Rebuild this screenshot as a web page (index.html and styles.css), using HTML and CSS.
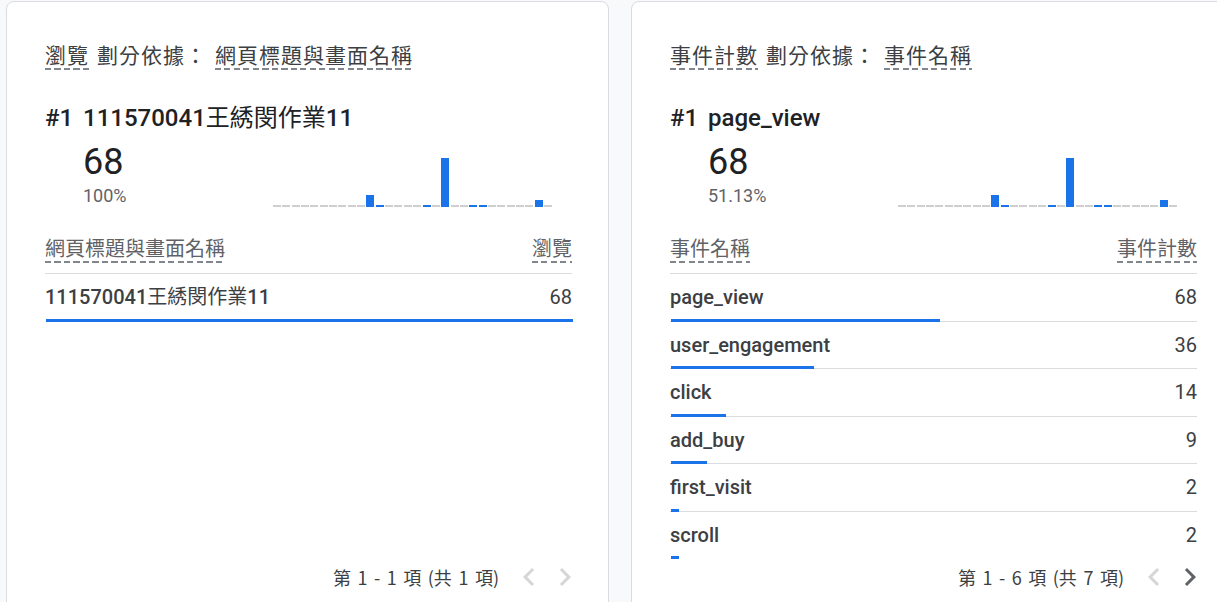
FILE: index.html
```html
<!DOCTYPE html>
<html lang="zh-Hant">
<head>
<meta charset="utf-8">
<title>報表卡片</title>
<link rel="stylesheet" href="styles.css">
</head>
<body>
<div class="page">
  <section class="card">
    <div class="card-title"><span class="dash">瀏覽</span><span class="plain">劃分依據：</span><span class="dash">網頁標題與畫面名稱</span></div>
    <div class="rank"><span class="rank-no">#1</span><span class="rank-name">111570041<span class="cjk">王綉閔作業</span>11</span></div>
    <div class="summary">
      <div class="figures"><div class="big">68</div><div class="pct">100%</div></div>
      <div class="spark">
        <i class="z"></i><i class="z"></i><i class="z"></i><i class="z"></i><i class="z"></i><i class="z"></i><i class="z"></i><i class="z"></i><i class="z"></i><i class="z"></i>
        <i class="b" style="height:12px"></i><i class="b" style="height:2px"></i><i class="z"></i><i class="z"></i><i class="z"></i><i class="z"></i><i class="b" style="height:2px"></i><i class="z"></i>
        <i class="b" style="height:49px"></i><i class="z"></i><i class="z"></i><i class="b" style="height:2px"></i><i class="b" style="height:2px"></i><i class="z"></i><i class="z"></i><i class="z"></i><i class="z"></i><i class="z"></i>
        <i class="b" style="height:7px"></i><i class="z"></i>
      </div>
    </div>
    <div class="table">
      <div class="thead"><span class="dash">網頁標題與畫面名稱</span><span class="dash">瀏覽</span></div>
      <div class="row">
        <div class="cells"><span class="name">111570041<span class="cjk">王綉閔作業</span>11</span><span class="val">68</span></div>
        <div class="track"><div class="fill" style="width:100%"></div></div>
      </div>
    </div>
    <div class="pager">
      <span class="range">第 1 - 1 項 (共 1 項)</span>
      <svg class="chev off" viewBox="0 0 24 24" width="36" height="36"><path d="M15.41 7.41L14 6l-6 6 6 6 1.41-1.41L10.83 12z"/></svg>
      <svg class="chev off" viewBox="0 0 24 24" width="36" height="36"><path d="M10 6L8.59 7.41 13.17 12l-4.58 4.59L10 18l6-6z"/></svg>
    </div>
  </section>

  <section class="card">
    <div class="card-title"><span class="dash">事件計數</span><span class="plain">劃分依據：</span><span class="dash">事件名稱</span></div>
    <div class="rank"><span class="rank-no">#1</span><span class="rank-name">page_view</span></div>
    <div class="summary">
      <div class="figures"><div class="big">68</div><div class="pct">51.13%</div></div>
      <div class="spark">
        <i class="z"></i><i class="z"></i><i class="z"></i><i class="z"></i><i class="z"></i><i class="z"></i><i class="z"></i><i class="z"></i><i class="z"></i><i class="z"></i>
        <i class="b" style="height:12px"></i><i class="b" style="height:2px"></i><i class="z"></i><i class="z"></i><i class="z"></i><i class="z"></i><i class="b" style="height:2px"></i><i class="z"></i>
        <i class="b" style="height:49px"></i><i class="z"></i><i class="z"></i><i class="b" style="height:2px"></i><i class="b" style="height:2px"></i><i class="z"></i><i class="z"></i><i class="z"></i><i class="z"></i><i class="z"></i>
        <i class="b" style="height:7px"></i><i class="z"></i>
      </div>
    </div>
    <div class="table">
      <div class="thead"><span class="dash">事件名稱</span><span class="dash">事件計數</span></div>
      <div class="row">
        <div class="cells"><span class="name">page_view</span><span class="val">68</span></div>
        <div class="track"><div class="fill" style="width:51.13%"></div></div>
      </div>
      <div class="row">
        <div class="cells"><span class="name">user_engagement</span><span class="val">36</span></div>
        <div class="track"><div class="fill" style="width:27.07%"></div></div>
      </div>
      <div class="row">
        <div class="cells"><span class="name">click</span><span class="val">14</span></div>
        <div class="track"><div class="fill" style="width:10.53%"></div></div>
      </div>
      <div class="row">
        <div class="cells"><span class="name">add_buy</span><span class="val">9</span></div>
        <div class="track"><div class="fill" style="width:6.77%"></div></div>
      </div>
      <div class="row">
        <div class="cells"><span class="name">first_visit</span><span class="val">2</span></div>
        <div class="track"><div class="fill" style="width:1.5%"></div></div>
      </div>
      <div class="row">
        <div class="cells"><span class="name">scroll</span><span class="val">2</span></div>
        <div class="track"><div class="fill" style="width:1.5%"></div></div>
      </div>
    </div>
    <div class="pager">
      <span class="range">第 1 - 6 項 (共 7 項)</span>
      <svg class="chev off" viewBox="0 0 24 24" width="36" height="36"><path d="M15.41 7.41L14 6l-6 6 6 6 1.41-1.41L10.83 12z"/></svg>
      <svg class="chev on" viewBox="0 0 24 24" width="36" height="36"><path d="M10 6L8.59 7.41 13.17 12l-4.58 4.59L10 18l6-6z"/></svg>
    </div>
  </section>
</div>
</body>
</html>
```

FILE: styles.css
```css
html, body {
  margin: 0;
  overflow: hidden;
  background: #f8f9fa;
}

.page {
  display: flex;
  gap: 22px;
  padding: 1px 0 0 6px;
  width: max-content;
}

.card {
  box-sizing: border-box;
  width: 603px;
  height: 610px;
  flex-shrink: 0;
  background: #fff;
  border: 1px solid #dadce0;
  border-radius: 8px;
  padding: 38px 36px 15px 38px;
  display: flex;
  flex-direction: column;
  font-family: Roboto, "Noto Sans CJK TC", sans-serif;
  color: #3c4043;
}

.dash {
  padding-bottom: 2px;
  background: repeating-linear-gradient(90deg, #80868b 0 6px, transparent 6px 9.5px) left bottom / 100% 2px no-repeat;
}

.card-title {
  display: flex;
  align-items: flex-start;
  gap: 8px;
  font-family: "Noto Sans CJK TC", sans-serif;
  font-size: 21px;
  letter-spacing: 1px;
  line-height: 28px;
  color: #3c4043;
}

.plain {
  padding-bottom: 2px;
}

.cjk {
  font-weight: 400;
}

.rank {
  display: flex;
  margin-top: 32px;
  font-size: 24px;
  line-height: 32px;
  font-weight: 500;
  color: #202124;
}

.rank-no {
  width: 38px;
  flex-shrink: 0;
}

.summary {
  display: flex;
  align-items: flex-end;
  margin-top: 8px;
  padding-left: 38px;
}

.figures {
  width: 190px;
  flex-shrink: 0;
}

.big {
  font-size: 36px;
  line-height: 40px;
  color: #202124;
}

.pct {
  margin-top: 3px;
  font-size: 18px;
  line-height: 22px;
  color: #5f6368;
}

.spark {
  width: 279px;
  height: 50px;
  display: grid;
  grid-template-columns: repeat(30, 1fr);
  column-gap: 1.33px;
  align-items: end;
}

.spark i {
  display: block;
}

.spark .z {
  height: 2px;
  background: #cfcfcf;
}

.spark .b {
  background: #1a73e8;
}

.table {
  flex: 1;
  margin-top: 28px;
}

.thead {
  display: flex;
  justify-content: space-between;
  align-items: flex-start;
  font-family: "Noto Sans CJK TC", sans-serif;
  font-size: 20px;
  line-height: 26px;
  color: #5f6368;
  padding-bottom: 10px;
  border-bottom: 1px solid #dadce0;
}

.row {
  padding-top: 11px;
}

.cells {
  display: flex;
  justify-content: space-between;
  font-size: 20px;
  line-height: 24px;
  color: #3c4043;
}

.name {
  font-weight: 500;
}

.track {
  margin-top: 9.5px;
  height: 3px;
  background: linear-gradient(#dadce0, #dadce0) left bottom / 100% 1px no-repeat;
}

.row:last-child .track {
  background: none;
}

.fill {
  height: 3px;
  margin-left: 1px;
  background: #1a73e8;
}

.pager {
  display: flex;
  justify-content: flex-end;
  align-items: center;
  height: 36px;
  margin-right: -11px;
  font-family: "Noto Sans CJK TC", sans-serif;
  font-size: 18px;
  word-spacing: 2.5px;
  color: #3c4043;
}

.range {
  margin-right: 12px;
}

.chev {
  display: block;
}

.chev.off {
  fill: #d4d6d8;
}

.chev.on {
  fill: #5f6368;
}
```
